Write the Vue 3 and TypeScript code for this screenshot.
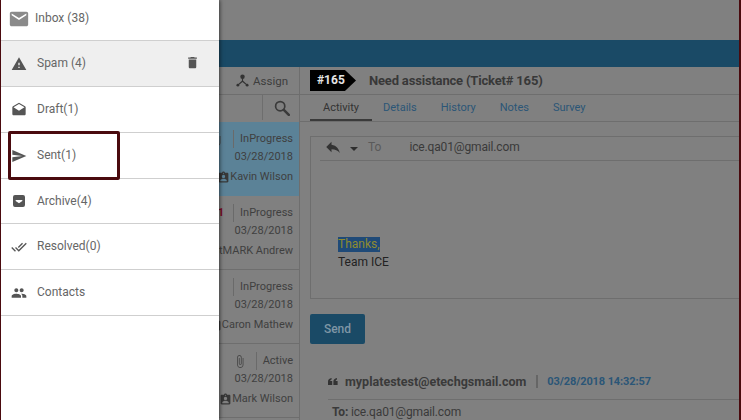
<script setup lang="ts">
const icons: Record<string, string> = {
  mail: 'M20 4H4c-1.1 0-2 .9-2 2v12c0 1.1.9 2 2 2h16c1.1 0 2-.9 2-2V6c0-1.1-.9-2-2-2zm0 4l-8 5-8-5V6l8 5 8-5v2z',
  warning: 'M1 21h22L12 2 1 21zm12-3h-2v-2h2v2zm0-4h-2v-4h2v4z',
  drafts: 'M21.99 8c0-.72-.37-1.35-.94-1.7L12 1 2.95 6.3C2.38 6.65 2 7.28 2 8v10c0 1.1.9 2 2 2h16c1.1 0 2-.9 2-2l-.01-10zM12 13L3.74 7.84 12 3l8.26 4.84L12 13z',
  send: 'M2.01 21L23 12 2.01 3 2 10l15 2-15 2z',
  archive: 'M6 3h12a3 3 0 0 1 3 3v12a3 3 0 0 1-3 3H6a3 3 0 0 1-3-3V6a3 3 0 0 1 3-3zm1 9l5 3.5 5-3.5v-1.5H7z',
  done: 'M18 7l-1.41-1.41-6.34 6.34 1.41 1.41L18 7zm4.24-1.41L11.66 16.17 7.48 12l-1.41 1.41L11.66 19l12-12-1.42-1.41zM.41 13.41L6 19l1.41-1.41L1.83 12 .41 13.41z',
  people: 'M16 11c1.66 0 2.99-1.34 2.99-3S17.66 5 16 5c-1.66 0-3 1.34-3 3s1.34 3 3 3zm-8 0c1.66 0 2.99-1.34 2.99-3S9.66 5 8 5C6.34 5 5 6.34 5 8s1.34 3 3 3zm0 2c-2.33 0-7 1.17-7 3.5V19h14v-2.5c0-2.33-4.67-3.5-7-3.5zm8 0c-.29 0-.62.02-.97.05 1.16.84 1.97 1.97 1.97 3.45V19h6v-2.5c0-2.33-4.67-3.5-7-3.5z',
}
const trash = 'M6 19c0 1.1.9 2 2 2h8c1.1 0 2-.9 2-2V7H6v12zM19 4h-3.5l-1-1h-5l-1 1H5v2h14V4z'
const reply = 'M10 9V5l-7 7 7 7v-4.1c5 0 8.5 1.6 11 5.1-1-5-4-10-11-11z'
const clip = 'M16.5 6v11.5c0 2.21-1.79 4-4 4s-4-1.79-4-4V5c0-1.38 1.12-2.5 2.5-2.5s2.5 1.12 2.5 2.5v10.5c0 .55-.45 1-1 1s-1-.45-1-1V6H10v9.5c0 1.38 1.12 2.5 2.5 2.5s2.5-1.12 2.5-2.5V5c0-2.21-1.79-4-4-4S7 2.79 7 5v12.5c0 3.04 2.46 5.5 5.5 5.5s5.5-2.46 5.5-5.5V6h-1.5z'
const badge = 'M19 3h-4.18C14.4 1.84 13.3 1 12 1c-1.3 0-2.4.84-2.82 2H5c-1.1 0-2 .9-2 2v14c0 1.1.9 2 2 2h14c1.1 0 2-.9 2-2V5c0-1.1-.9-2-2-2zm-7 0c.55 0 1 .45 1 1s-.45 1-1 1-1-.45-1-1 .45-1 1-1zm0 4c1.66 0 3 1.34 3 3s-1.34 3-3 3-3-1.34-3-3 1.34-3 3-3zm6 12H6v-1.4c0-2 4-3.1 6-3.1s6 1.1 6 3.1V19z'

const menu = [
  { label: 'Inbox (38)', icon: 'mail', cls: 'inbox' },
  { label: 'Spam (4)', icon: 'warning', cls: 'spam' },
  { label: 'Draft(1)', icon: 'drafts', cls: '' },
  { label: 'Sent(1)', icon: 'send', cls: '' },
  { label: 'Archive(4)', icon: 'archive', cls: 'short' },
  { label: 'Resolved(0)', icon: 'done', cls: '' },
  { label: 'Contacts', icon: 'people', cls: 'last' },
]

const tickets = [
  { status: 'InProgress', name: 'Kavin Wilson', clip: true, pri: '', active: true },
  { status: 'InProgress', name: 'StMARK Andrew', clip: false, pri: 'P1', active: false },
  { status: 'InProgress', name: 'Caron Mathew', clip: false, pri: '', active: false },
  { status: 'Active', name: 'Mark Wilson', clip: true, pri: '', active: false },
]

const tabs = ['Activity', 'Details', 'History', 'Notes', 'Survey']
</script>

<template>
  <div class="page">
    <div class="topbar"></div>
    <div class="bluebar"></div>

    <div class="content">
      <section class="list">
        <div class="list-actions">
          <svg class="assign-icon" viewBox="0 0 14 14">
            <circle cx="7" cy="3" r="2.4" />
            <circle cx="2" cy="12" r="1.5" />
            <circle cx="12" cy="12" r="1.5" />
            <path d="M6.4 4h1.2v3.4l4.8 4.2-.8.9L7 8.6l-4.6 3.9-.8-.9 4.8-4.2z" />
          </svg>
          <span>Assign</span>
        </div>
        <div class="list-search">
          <span class="search-box">
            <svg viewBox="0 0 16 16">
              <circle cx="6.2" cy="6.2" r="4.6" class="lens" />
              <path d="M9.8 9.8l5 5" class="handle" />
            </svg>
          </span>
        </div>
        <div v-for="t in tickets" :key="t.name" class="ticket" :class="{ selected: t.active }">
          <div class="ticket-line status-line">
            <svg v-if="t.clip" class="clip" viewBox="0 0 24 24"><path :d="clip" /></svg>
            <span v-if="t.pri" class="pri">{{ t.pri }}</span>
            <i class="vr"></i>
            <span>{{ t.status }}</span>
          </div>
          <div class="ticket-line">03/28/2018</div>
          <div class="ticket-line name-line">
            <svg class="badge" viewBox="0 0 24 24"><path :d="badge" /></svg>
            <span>{{ t.name }}</span>
          </div>
        </div>
      </section>

      <section class="detail">
        <div class="ticket-head">
          <span class="ticket-no">#165</span>
          <span class="ticket-title">Need assistance (Ticket# 165)</span>
        </div>
        <nav class="tabs">
          <span v-for="(tab, i) in tabs" :key="tab" class="tab" :class="{ current: i === 0 }">{{ tab }}</span>
        </nav>

        <div class="compose">
          <div class="to-row">
            <svg class="reply" viewBox="0 0 24 24"><path :d="reply" /></svg>
            <i class="caret"></i>
            <span class="to-label">To</span>
            <span class="to-addr">ice.qa01@gmail.com</span>
          </div>
          <div class="body">
            <p><mark>Thanks,</mark></p>
            <p>Team ICE</p>
          </div>
        </div>

        <button class="send-btn">Send</button>

        <div class="message">
          <div class="msg-head">
            <svg class="quote" viewBox="0 0 10 7">
              <path d="M0 7V3.6C0 1.6 1.2.4 3.6 0v1.5C2.7 1.8 2.3 2.3 2.3 3h1.9v4zM5.4 7V3.6C5.4 1.6 6.6.4 9 0v1.5c-.9.3-1.3.8-1.3 1.5h1.9v4z" />
            </svg>
            <strong>myplatestest@etechgsmail.com</strong>
            <i class="msg-sep"></i>
            <span class="msg-date">03/28/2018 14:32:57</span>
          </div>
          <div class="msg-to"><b>To:</b> ice.qa01@gmail.com</div>
        </div>
      </section>
    </div>

    <aside class="drawer">
      <div v-for="m in menu" :key="m.label" class="menu-row" :class="m.cls">
        <svg class="menu-icon" viewBox="0 0 24 24"><path :d="icons[m.icon]" /></svg>
        <span class="menu-label">{{ m.label }}</span>
        <svg v-if="m.icon === 'warning'" class="trash" viewBox="0 0 24 24"><path :d="trash" /></svg>
      </div>
    </aside>
    <div class="sent-mark"></div>
  </div>
</template>

<style scoped>
.page {
  position: relative;
  width: 741px;
  height: 420px;
  box-sizing: border-box;
  overflow: hidden;
  background: #808080;
  border-left: 1px solid #4a0a0e;
  border-right: 2px solid #4a0a0e;
  font-family: Roboto, "Liberation Sans", sans-serif;
  font-size: 12px;
  color: #3d3d3d;
}

.topbar {
  height: 40px;
}

.bluebar {
  height: 27px;
  background: #1a4a66;
}

.content {
  display: flex;
  height: 353px;
}

/* left ticket list */
.list {
  width: 299px;
  flex: none;
  box-sizing: border-box;
  border-right: 1px solid #6e6e6e;
}

.list-actions {
  height: 28px;
  box-sizing: border-box;
  display: flex;
  align-items: center;
  justify-content: flex-end;
  gap: 4px;
  padding-right: 11px;
  border-bottom: 1px solid #6e6e6e;
  font-size: 11.5px;
}

.assign-icon {
  width: 13px;
  height: 13px;
  fill: #333;
}

.list-search {
  height: 27px;
  display: flex;
  justify-content: flex-end;
}

.search-box {
  width: 37px;
  height: 25px;
  box-sizing: border-box;
  border-left: 1px solid #6e6e6e;
  display: flex;
  align-items: center;
  justify-content: center;
  padding-left: 1px;
}

.search-box svg {
  width: 16px;
  height: 16px;
}

.lens {
  fill: none;
  stroke: #3a3a3a;
  stroke-width: 1.7;
}

.handle {
  fill: none;
  stroke: #3a3a3a;
  stroke-width: 2.6;
  stroke-linecap: round;
}

.ticket {
  height: 74px;
  box-sizing: border-box;
  padding: 8px 6px 0 0;
  border-bottom: 1px solid #6e6e6e;
}

.ticket.selected {
  background: #5b8297;
  border-bottom: 0;
}

.ticket-line {
  height: 18px;
  display: flex;
  align-items: center;
  justify-content: flex-end;
  white-space: nowrap;
  line-height: 18px;
  font-size: 11px;
  color: #3f3f3f;
}

.name-line {
  margin-top: 2px;
}

.vr {
  width: 1px;
  height: 18px;
  background: #6a6a6a;
  margin: 0 6px 0 9px;
}

.clip {
  width: 14px;
  height: 15px;
  fill: #4a4a4a;
}

.pri {
  color: #7a0a22;
  font-weight: 700;
}

.badge {
  width: 13px;
  height: 13px;
  fill: #383838;
  flex: none;
}

/* right ticket detail */
.detail {
  flex: 1;
  min-width: 0;
}

.ticket-head {
  height: 28px;
  box-sizing: border-box;
  display: flex;
  align-items: center;
  padding-left: 10px;
  gap: 13px;
  border-bottom: 1px solid #6e6e6e;
}

.ticket-no {
  width: 46px;
  height: 21px;
  box-sizing: border-box;
  padding-left: 7px;
  line-height: 21px;
  background: #000;
  color: #e4e4e4;
  font-weight: 700;
  font-size: 12px;
  clip-path: polygon(0 0, 76% 0, 100% 50%, 76% 100%, 0 100%);
}

.ticket-title {
  font-size: 13px;
  font-weight: 700;
  letter-spacing: -0.18px;
  color: #383838;
}

.tabs {
  height: 27px;
  box-sizing: border-box;
  display: flex;
  padding-left: 10px;
  border-bottom: 1px solid #6e6e6e;
}

.tab {
  padding: 0 12px;
  line-height: 26px;
  font-size: 11px;
  color: #2b5677;
}

.tab.current {
  color: #333;
  height: 26px;
  padding: 0 13px 0 13px;
  margin-right: -1px;
  box-sizing: border-box;
  border-bottom: 2px solid #3a3a3a;
}

.compose {
  height: 163px;
  box-sizing: border-box;
  margin: 14px 0 0 10px;
  border: 1px solid #6e6e6e;
  border-width: 1px 0 1px 1px;
}

.to-row {
  height: 24px;
  box-sizing: border-box;
  margin-left: 9px;
  padding-bottom: 3px;
  display: flex;
  align-items: center;
  border-bottom: 1px solid #6e6e6e;
}

.reply {
  width: 18px;
  height: 18px;
  fill: #333;
  margin-left: 4px;
}

.caret {
  width: 0;
  height: 0;
  margin: 4px 0 0 8px;
  border: 4px solid transparent;
  border-top-color: #2e2e2e;
  border-bottom: 0;
}

.to-label {
  margin-left: 10px;
  color: #5a5a5a;
  font-size: 12px;
}

.to-addr {
  margin-left: 28px;
  font-size: 12px;
  letter-spacing: -0.15px;
  color: #3a3a3a;
}

.body {
  padding: 74px 0 0 27px;
}

.body p {
  margin: 0;
  height: 18px;
  line-height: 18px;
  font-size: 12px;
  color: #222;
}

.body mark {
  display: inline-block;
  background: #1f4a78;
  color: #8f8a30;
  line-height: 15px;
}

.send-btn {
  display: block;
  width: 55px;
  height: 30px;
  margin: 15px 0 0 10px;
  padding: 0 0 1px;
  border: 0;
  border-radius: 2px;
  background: #1a4a66;
  color: #7f96a5;
  font: 500 12px Roboto, "Liberation Sans", sans-serif;
}

.message {
  margin: 28px 0 0 28px;
}

.msg-head {
  height: 18px;
  padding-bottom: 9px;
  display: flex;
  align-items: center;
  border-bottom: 1px solid #6e6e6e;
}

.quote {
  width: 10px;
  height: 7px;
  margin-right: 7px;
  fill: #333;
}

.msg-head strong {
  font-size: 12.5px;
  color: #3a3a3a;
}

.msg-sep {
  width: 2px;
  height: 13px;
  margin: 0 9px 0 10px;
  background: #666;
}

.msg-date {
  font-size: 11px;
  font-weight: 700;
  letter-spacing: -0.1px;
  color: #2b5677;
}

.msg-to {
  margin: 5px 0 0 4px;
  font-size: 12px;
  letter-spacing: -0.15px;
  color: #3a3a3a;
}

/* slide-in drawer sitting over the dimmed page */
.drawer {
  position: absolute;
  left: 0;
  top: 0;
  bottom: 0;
  width: 218px;
  background: #fff;
  box-shadow: 1px 0 4px rgba(0, 0, 0, 0.55);
}

.menu-row {
  height: 46px;
  box-sizing: border-box;
  display: flex;
  align-items: center;
  padding-left: 10px;
  border-bottom: 1px solid #cfcfcf;
  color: #666;
  font-size: 12px;
}

.menu-row.short {
  height: 45px;
}

.menu-row.inbox {
  height: 41px;
  padding-left: 7px;
}

.menu-row.spam {
  background: #efefef;
}

.menu-icon {
  width: 16px;
  height: 16px;
  fill: #555;
  flex: none;
}

.inbox .menu-icon {
  width: 22px;
  height: 22px;
  fill: #8a8a8a;
  margin-top: -2px;
}

.menu-label {
  margin-left: 10px;
  margin-top: -2px;
}

.short .menu-label {
  margin-top: 0;
}

.inbox .menu-label {
  margin-left: 5px;
  margin-top: -4px;
}

.trash {
  width: 15px;
  height: 15px;
  fill: #555;
  margin-left: auto;
  margin-right: 19px;
  margin-top: -2px;
}

.sent-mark {
  position: absolute;
  left: 7px;
  top: 131px;
  width: 112px;
  height: 49px;
  box-sizing: border-box;
  border: 3px solid #4a0a0e;
  border-radius: 2px;
}
</style>
